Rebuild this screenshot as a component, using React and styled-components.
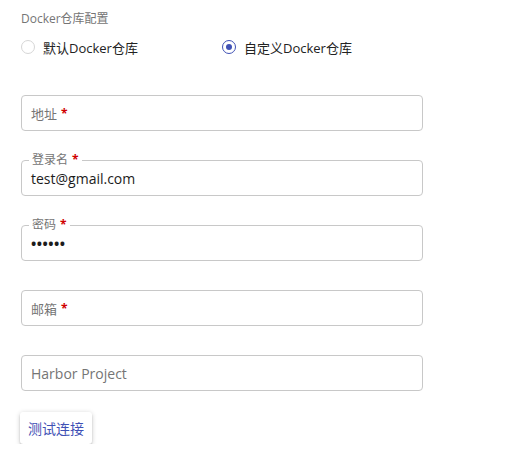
import styled, { createGlobalStyle } from "styled-components";

const GlobalStyle = createGlobalStyle`
    body {
        margin: 0;
        background: #ffffff;
        font-family: "Segoe UI", "Open Sans", "Noto Sans CJK SC", sans-serif;
    }
`;

const fields = [
    { label: "地址", required: true, value: "" },
    { label: "登录名", required: true, value: "test@gmail.com" },
    { label: "密码", required: true, value: "••••••", password: true },
    { label: "邮箱", required: true, value: "" },
    { label: "Harbor Project", required: false, value: "" },
];

export default function App() {
    return (
        <>
            <GlobalStyle />
            <Page>
                <Title>Docker仓库配置</Title>
                <RadioRow>
                    <RadioOption>
                        <RadioCircle />
                        <span>默认Docker仓库</span>
                    </RadioOption>
                    <RadioOption>
                        <RadioCircle $checked />
                        <span>自定义Docker仓库</span>
                    </RadioOption>
                </RadioRow>
                <Fields>
                    {fields.map((field) => (
                        <Field key={field.label}>
                            <Outline $filled={!!field.value}>
                                {field.value && (
                                    <Legend>
                                        {field.label}
                                        {field.required && <Star>*</Star>}
                                    </Legend>
                                )}
                            </Outline>
                            {field.value ? (
                                <Value $password={field.password}>
                                    {field.value}
                                </Value>
                            ) : (
                                <Placeholder $latin={!field.required}>
                                    {field.label}
                                    {field.required && <Star>*</Star>}
                                </Placeholder>
                            )}
                        </Field>
                    ))}
                </Fields>
                <TestButton type="button">测试连接</TestButton>
            </Page>
        </>
    );
}

const Page = styled.div`
    padding: 10px 0 0 21px;
    width: 402px;
`;

const Title = styled.div`
    font-size: 12px;
    color: #757575;
    line-height: 18px;
`;

const RadioRow = styled.div`
    display: flex;
    margin-top: 10px;
    height: 18px;
    align-items: center;
`;

const RadioOption = styled.label`
    display: flex;
    align-items: center;
    gap: 8px;
    width: 201px;
    font-size: 13px;
    color: #222222;
`;

const RadioCircle = styled.span`
    width: 14px;
    height: 14px;
    box-sizing: border-box;
    border-radius: 50%;
    border: 1px solid ${(p) => (p.$checked ? "#3f51b5" : "#d6d6d6")};
    display: flex;
    align-items: center;
    justify-content: center;

    &::after {
        content: "";
        width: 6px;
        height: 6px;
        border-radius: 50%;
        background: #3f51b5;
        display: ${(p) => (p.$checked ? "block" : "none")};
    }
`;

const Fields = styled.div`
    display: flex;
    flex-direction: column;
    gap: 29px;
    margin-top: 39px;
`;

const Field = styled.div`
    position: relative;
    height: 36px;
`;

const Outline = styled.fieldset`
    position: absolute;
    inset: 0;
    margin: 0;
    padding: 0 7px;
    border: 1px solid #c8c8c8;
    border-radius: 4px;
    pointer-events: none;
    top: ${(p) => (p.$filled ? "-7px" : "0")};
`;

const Legend = styled.legend`
    font-size: 12px;
    color: #757575;
    padding: 0 3px;
    line-height: 14px;
`;

const Star = styled.span`
    color: #d00000;
    margin-left: 4px;
    font-size: 12px;
    font-weight: bold;
`;

const Value = styled.div`
    position: absolute;
    left: 10px;
    top: 10px;
    font-size: ${(p) => (p.$password ? "14px" : "14px")};
    font-weight: ${(p) => (p.$password ? "bold" : "normal")};
    letter-spacing: ${(p) => (p.$password ? "0.5px" : "0")};
    color: #1c1c1c;
    line-height: 18px;
`;

const Placeholder = styled.div`
    display: flex;
    align-items: center;
    height: 100%;
    padding-left: 10px;
    font-size: ${(p) => (p.$latin ? "14px" : "13px")};
    color: #757575;
`;

const TestButton = styled.button`
    margin-top: 21px;
    margin-left: -1px;
    width: 72px;
    height: 32px;
    border: none;
    border-radius: 3px;
    background: #ffffff;
    color: #3f51b5;
    font-family: inherit;
    font-size: 14px;
    box-shadow: 0 1px 5px rgba(0, 0, 0, 0.2), 0 2px 2px rgba(0, 0, 0, 0.14),
        0 3px 1px -2px rgba(0, 0, 0, 0.2);
    cursor: pointer;
`;
